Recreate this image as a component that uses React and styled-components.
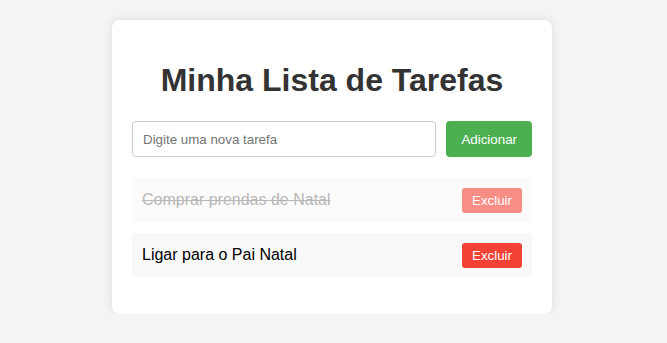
import React, { useState } from 'react';
import styled, { createGlobalStyle } from 'styled-components';

const GlobalStyle = createGlobalStyle`
    body {
        margin: 0;
        background: #f4f4f4;
        font-family: "Liberation Sans", Arial, sans-serif;
    }
`

const Page = styled.div`
    display: flex;
    justify-content: center;
    padding: 20px 3px 0 0;
`

const Card = styled.div`
    width: 400px;
    background: #fff;
    padding: 20px 20px 37px;
    border-radius: 8px;
    box-shadow: 0 0 10px rgba(0, 0, 0, 0.1);
`

const Title = styled.h1`
    font-size: 32px;
    font-weight: bold;
    color: #333;
    text-align: center;
    margin: 22px 0 22px;
    line-height: 37px;
`

const Form = styled.div`
    display: flex;
    gap: 10px;
    margin-bottom: 21px;
`

const Input = styled.input`
    flex: 1;
    height: 36px;
    box-sizing: border-box;
    padding: 10px;
    font-family: inherit;
    font-size: 13.33px;
    border: 1px solid #ccc;
    border-radius: 4px;
    outline: none;

    &::placeholder {
        color: #757575;
    }
`

const AddButton = styled.button`
    height: 36px;
    padding: 0 15px;
    background: #4caf50;
    color: #fff;
    border: none;
    border-radius: 4px;
    font-family: inherit;
    font-size: 13.33px;
    cursor: pointer;
`

const List = styled.ul`
    list-style: none;
    margin: 0;
    padding: 0;
    display: flex;
    flex-direction: column;
    gap: 11px;
`

const Item = styled.li`
    display: flex;
    align-items: center;
    justify-content: space-between;
    height: 44px;
    box-sizing: border-box;
    padding: 0 10px;
    background: #f9f9f9;
    border-radius: 4px;
    opacity: ${props => (props.$done ? 0.6 : 1)};
`

const ItemText = styled.span`
    font-size: 16px;
    color: ${props => (props.$done ? '#888' : '#000')};
    text-decoration: ${props => (props.$done ? 'line-through' : 'none')};
    cursor: pointer;
`

const DeleteButton = styled.button`
    height: 25px;
    padding: 0 10px;
    background: #f44336;
    color: #fff;
    border: none;
    border-radius: 3px;
    font-family: inherit;
    font-size: 13.33px;
    cursor: pointer;
`

const App = () => {
    const [tasks, setTasks] = useState([
        { id: 1, text: 'Comprar prendas de Natal', done: true },
        { id: 2, text: 'Ligar para o Pai Natal', done: false },
    ])
    const [value, setValue] = useState('')

    const addTask = () => {
        if (!value.trim()) return
        setTasks([...tasks, { id: Date.now(), text: value, done: false }])
        setValue('')
    }

    return (
        <>
            <GlobalStyle />
            <Page>
                <Card>
                    <Title>Minha Lista de Tarefas</Title>
                    <Form>
                        <Input
                            placeholder="Digite uma nova tarefa"
                            value={value}
                            onChange={e => setValue(e.target.value)}
                        />
                        <AddButton onClick={addTask}>Adicionar</AddButton>
                    </Form>
                    <List>
                        {tasks.map(task => (
                            <Item key={task.id} $done={task.done}>
                                <ItemText
                                    $done={task.done}
                                    onClick={() => setTasks(tasks.map(t => t.id === task.id ? { ...t, done: !t.done } : t))}
                                >
                                    {task.text}
                                </ItemText>
                                <DeleteButton onClick={() => setTasks(tasks.filter(t => t.id !== task.id))}>
                                    Excluir
                                </DeleteButton>
                            </Item>
                        ))}
                    </List>
                </Card>
            </Page>
        </>
    )
}

export default App;
